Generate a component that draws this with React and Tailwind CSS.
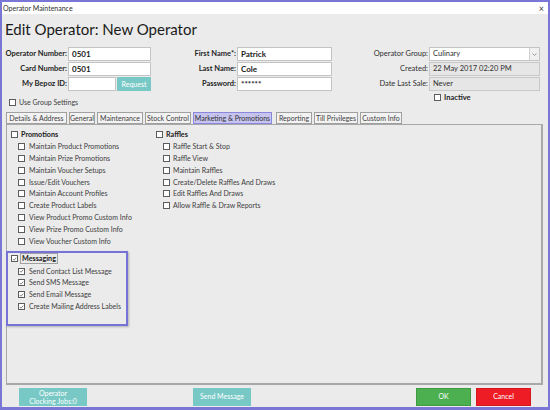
import React from "react";

const Box = ({ checked }) => (
  <span className="w-[7px] h-[7px] border border-[#5c5c5c] bg-white flex items-center justify-center shrink-0">
    {checked && (
      <svg viewBox="0 0 8 8" className="w-[6px] h-[6px]">
        <path d="M1.3 4.1 L3.2 6 L6.8 1.9" fill="none" stroke="#555" strokeWidth="1.2" />
      </svg>
    )}
  </span>
);

const Item = ({ label, checked, gap = "gap-[4px]" }) => (
  <div className={`flex items-center h-[11.8px] ${gap}`}>
    <Box checked={checked} />
    <span className="text-[7px] text-[#404040] leading-none whitespace-nowrap">{label}</span>
  </div>
);

const Header = ({ label, checked }) => (
  <div className="flex items-center h-[11.8px] gap-[3px]">
    <Box checked={checked} />
    <span className="text-[7.2px] font-bold text-[#202020] leading-none">{label}</span>
  </div>
);

const tabs = [
  ["Details & Address", "w-[61px]"],
  ["General", "w-[26px]"],
  ["Maintenance", "w-[46px]"],
  ["Stock Control", "w-[46px]"],
  ["Marketing & Promotions", "w-[79px]"],
  ["Reporting", "w-[36px]"],
  ["Till Privileges", "w-[44px]"],
  ["Custom Info", "w-[42px]"],
];

const promotions = [
  "Maintain Product Promotions",
  "Maintain Prize Promotions",
  "Maintain Voucher Setups",
  "Issue/Edit Vouchers",
  "Maintain Account Profiles",
  "Create Product Labels",
  "View Product Promo Custom Info",
  "View Prize Promo Custom Info",
  "View Voucher Custom Info",
];

const raffles = [
  "Raffle Start & Stop",
  "Raffle View",
  "Maintain Raffles",
  "Create/Delete Raffles And Draws",
  "Edit Raffles And Draws",
  "Allow Raffle & Draw Reports",
];

const messaging = [
  "Send Contact List Message",
  "Send SMS Message",
  "Send Email Message",
  "Create Mailing Address Labels",
];

const Input = ({ value, width, bold }) => (
  <div
    className={`${width} h-[14px] border border-[#c4c4c4] bg-white flex items-center pl-[3px] text-[8px] text-[#202020] leading-none ${bold ? "font-bold" : ""}`}
  >
    {value}
  </div>
);

const BoldLabel = ({ children, width }) => (
  <div className={`${width} text-right pr-[1px] text-[7.5px] font-bold text-[#252525] whitespace-nowrap`}>{children}</div>
);

const Label = ({ children }) => (
  <div className="w-[97px] text-right pr-[1px] text-[7.5px] text-[#303030] whitespace-nowrap">{children}</div>
);

export default function App() {
  return (
    <div className="w-[550px] h-[410px] border-2 border-b-[3px] border-[#7a76d6] bg-[#ebebeb] flex flex-col font-['Lato',sans-serif] overflow-hidden">
      {/* title bar */}
      <div className="h-[12px] bg-white flex items-center justify-between pl-[1px] pr-[4px] shrink-0">
        <span className="text-[7px] text-[#303030] leading-none">Operator Maintenance</span>
        <span className="text-[9px] text-[#404040] leading-none">×</span>
      </div>

      {/* heading */}
      <div className="h-[33px] pl-[3px] pt-[5px] shrink-0">
        <h1 className="text-[15px] leading-[20px] text-[#1a1a1a]">Edit Operator: New Operator</h1>
      </div>

      {/* form */}
      <div className="flex flex-col gap-[1px] shrink-0">
        <div className="flex items-center">
          <BoldLabel width="w-[66px]">Operator Number:</BoldLabel>
          <Input value="0501" width="w-[83px]" bold />
          <BoldLabel width="w-[86px]">First Name*:</BoldLabel>
          <Input value="Patrick" width="w-[95px]" bold />
          <Label>Operator Group:</Label>
          <div className="w-[111px] h-[14px] border border-[#c4c4c4] bg-white flex items-center">
            <span className="flex-1 pl-[3px] text-[7.5px] text-[#303030] leading-none">Culinary</span>
            <span className="w-[10px] h-full border-l border-[#d0d0d0] bg-[#f0f0f0] flex items-center justify-center">
              <svg viewBox="0 0 8 8" className="w-[5px] h-[5px]">
                <path d="M1 2.5 L4 5.5 L7 2.5" fill="none" stroke="#666" strokeWidth="1" />
              </svg>
            </span>
          </div>
        </div>
        <div className="flex items-center">
          <BoldLabel width="w-[66px]">Card Number:</BoldLabel>
          <Input value="0501" width="w-[83px]" bold />
          <BoldLabel width="w-[86px]">Last Name:</BoldLabel>
          <Input value="Cole" width="w-[95px]" bold />
          <Label>Created:</Label>
          <div className="w-[111px] h-[14px] border border-[#c8c8c8] bg-[#e6e6e6] flex items-center pl-[3px] text-[7.5px] text-[#303030] leading-none">22 May 2017 02:20 PM</div>
        </div>
        <div className="flex items-center">
          <BoldLabel width="w-[66px]">My Bepoz ID:</BoldLabel>
          <div className="w-[48px] h-[14px] border border-[#c4c4c4] bg-white" />
          <div className="w-[34px] h-[14px] ml-[1px] bg-[#78c9c6] text-white text-[7px] flex items-center justify-center leading-none">Request</div>
          <BoldLabel width="w-[86px]">Password:</BoldLabel>
          <Input value="******" width="w-[95px]" bold />
          <Label>Date Last Sale:</Label>
          <div className="w-[111px] h-[14px] border border-[#c8c8c8] bg-[#e6e6e6] flex items-center pl-[3px] text-[7.5px] text-[#303030] leading-none">Never</div>
        </div>
        <div className="flex h-[17px]">
          <div className="self-end ml-[7px] mb-[3px] flex items-center gap-[3px]">
            <Box />
            <span className="text-[7px] text-[#404040] leading-none">Use Group Settings</span>
          </div>
          <div className="ml-[356px] mt-[2px] flex items-center gap-[3px] self-start">
            <Box />
            <span className="text-[7.5px] font-bold text-[#252525] leading-none">Inactive</span>
          </div>
        </div>
      </div>

      {/* tabs */}
      <div className="flex items-end ml-[4px] mt-[3px] h-[12px] shrink-0 gap-[2px]">
        {tabs.map(([t, w]) => {
          const sel = t === "Marketing & Promotions";
          return (
            <div
              key={t}
              className={`${w} h-[12px] flex items-center justify-center text-[7px] leading-none whitespace-nowrap border ${
                sel ? "bg-[#c6c4ef] border-[#8b87dc] text-[#303030] mr-[2px]" : "bg-[#f2f2f2] border-[#a0a0a0] text-[#404040]"
              }`}
            >
              {t}
            </div>
          );
        })}
      </div>

      {/* panel */}
      <div className="flex-1 ml-[4px] mr-[5px] border border-r-2 border-b-2 border-[#a8a8a8] bg-[#ebebeb] flex flex-col">
        <div className="flex pt-[4px]">
          <div className="w-[149px] pl-[4px] flex flex-col">
            <Header label="Promotions" />
            <div className="pl-[7px] flex flex-col">
              {promotions.map((p) => (
                <Item key={p} label={p} />
              ))}
            </div>
          </div>
          <div className="flex flex-col">
            <Header label="Raffles" />
            <div className="pl-[7px] flex flex-col">
              {raffles.map((p) => (
                <Item key={p} label={p} gap="gap-[3px]" />
              ))}
            </div>
          </div>
        </div>
        <div className="ml-[-1px] mt-[4px] w-[122px] h-[75px] border-2 border-[#7773d6] shadow-[1px_1px_2px_rgba(0,0,0,0.25)] pl-[3px] flex flex-col">
          <div className="flex items-center h-[11.8px] gap-[2px]">
            <Box checked />
            <span className="text-[7.2px] font-bold text-[#202020] leading-none border border-[#a0a0a0] px-[1px] py-[1px]">Messaging</span>
          </div>
          <div className="pl-[7px] flex flex-col mt-[0.5px]">
            {messaging.map((p) => (
              <Item key={p} label={p} checked />
            ))}
          </div>
        </div>
      </div>

      {/* buttons */}
      <div className="h-[22px] flex items-center shrink-0 pt-[1px]">
        <div className="ml-[17px] w-[68px] h-[18px] bg-[#78c9c6] text-white text-[7px] leading-[8px] flex flex-col items-center justify-center text-center">
          <span>Operator</span>
          <span>Clocking Jobs:0</span>
        </div>
        <div className="ml-[106px] w-[58px] h-[18px] bg-[#78c9c6] text-white text-[7px] flex items-center justify-center leading-none">Send Message</div>
        <div className="ml-[165px] w-[55px] h-[18px] bg-[#4caf50] border border-[#3f9a43] text-white text-[7px] flex items-center justify-center leading-none">OK</div>
        <div className="ml-[5px] w-[55px] h-[18px] bg-[#ee1c25] border border-[#d41820] text-white text-[7px] flex items-center justify-center leading-none">Cancel</div>
      </div>
    </div>
  );
}
